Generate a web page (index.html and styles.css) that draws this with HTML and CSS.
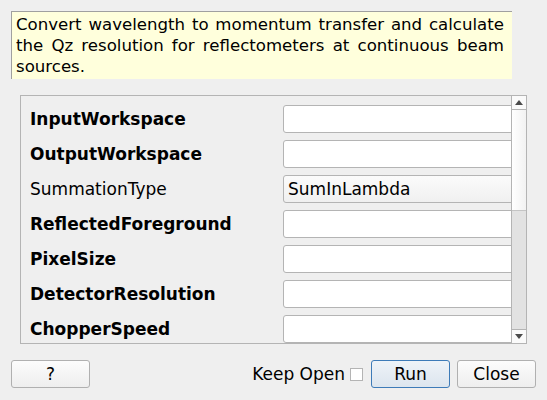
FILE: index.html
```html
<!DOCTYPE html>
<html>
<head>
<meta charset="utf-8">
<link rel="stylesheet" href="styles.css">
</head>
<body>
<div class="dialog">
  <div class="desc">Convert wavelength to momentum transfer and calculate the Qz resolution for reflectometers at continuous beam sources.</div>
  <div class="frame">
    <div class="props">
      <div class="row"><span class="label bold">InputWorkspace</span><span class="field"></span></div>
      <div class="row"><span class="label bold">OutputWorkspace</span><span class="field"></span></div>
      <div class="row"><span class="label">SummationType</span><span class="field combo">SumInLambda</span></div>
      <div class="row"><span class="label bold">ReflectedForeground</span><span class="field"></span></div>
      <div class="row"><span class="label bold">PixelSize</span><span class="field"></span></div>
      <div class="row"><span class="label bold">DetectorResolution</span><span class="field"></span></div>
      <div class="row"><span class="label bold">ChopperSpeed</span><span class="field"></span></div>
    </div>
    <div class="scrollbar">
      <div class="sb-btn"><svg width="8" height="5" viewBox="0 0 8 5"><polygon points="0,5 8,5 4,0" fill="#4a4a4a"/></svg></div>
      <div class="sb-handle"></div>
      <div class="sb-track"></div>
      <div class="sb-btn sb-down"><svg width="8" height="5" viewBox="0 0 8 5"><polygon points="0,0 8,0 4,5" fill="#4a4a4a"/></svg></div>
    </div>
  </div>
  <div class="buttons">
    <button class="btn help">?</button>
    <div class="spacer"></div>
    <span class="keep">Keep Open</span>
    <span class="check"></span>
    <button class="btn run">Run</button>
    <button class="btn close">Close</button>
  </div>
</div>
</body>
</html>
```
FILE: styles.css
```css
html, body {
  margin: 0;
  padding: 0;
  background: #efefef;
}
body {
  font-family: "DejaVu Sans", sans-serif;
  font-size: 17px;
  color: #000;
  width: 547px;
  height: 400px;
  overflow: hidden;
}
.dialog {
  display: flex;
  flex-direction: column;
  padding: 11px 11px 0 11px;
}
.desc {
  width: 501px;
  height: 68px;
  box-sizing: border-box;
  background: #ffffdc;
  border-top: 1px solid #a0a0a0;
  border-left: 1px solid #a0a0a0;
  padding: 2px 8px 0 4px;
  font-size: 16.6px;
  line-height: 21px;
  text-align: justify;
}
.frame {
  margin: 16px 0 0 9px;
  width: 507px;
  height: 249px;
  box-sizing: border-box;
  border: 1px solid #b4b4b4;
  display: flex;
  overflow: hidden;
}
.props {
  flex: 1;
  overflow: hidden;
  padding: 9px 0 0 9px;
  display: flex;
  flex-direction: column;
  gap: 7px;
}
.row {
  display: flex;
  align-items: center;
  height: 28px;
  flex-shrink: 0;
}
.label {
  width: 253px;
  flex-shrink: 0;
}
.bold {
  font-weight: bold;
}
.field {
  flex-shrink: 0;
  width: 260px;
  height: 28px;
  box-sizing: border-box;
  background: #fff;
  border: 1px solid #b4b4b4;
  border-radius: 3px;
}
.combo {
  background: linear-gradient(#fbfbfb, #f0f0f0);
  padding-left: 4px;
  line-height: 26px;
}
.scrollbar {
  width: 14px;
  flex-shrink: 0;
  border-left: 1px solid #b4b4b4;
  display: flex;
  flex-direction: column;
}
.sb-btn {
  height: 13px;
  flex-shrink: 0;
  background: #fafafa;
  border-bottom: 1px solid #b4b4b4;
  display: flex;
  align-items: center;
  justify-content: center;
}
.sb-down {
  border-bottom: none;
  border-top: 1px solid #b4b4b4;
  height: 13px;
}
.sb-handle {
  height: 100px;
  flex-shrink: 0;
  background: linear-gradient(90deg, #ffffff, #f2f2f2);
  border-bottom: 1px solid #c4c4c4;
}
.sb-track {
  flex: 1;
  background: #e2e2e2;
}
.buttons {
  display: flex;
  align-items: center;
  margin-top: 16px;
  height: 28px;
}
.spacer {
  flex: 1;
}
.btn {
  font-family: "DejaVu Sans", sans-serif;
  font-size: 17px;
  height: 28px;
  width: 79px;
  box-sizing: border-box;
  border: 1px solid #b0b0b0;
  border-radius: 3px;
  background: linear-gradient(#fcfcfc, #eeeeee);
  color: #000;
  padding: 0;
}
.help {
  width: 79px;
}
.run {
  border-color: #3d7bb8;
  background: linear-gradient(#eef3f8, #dce5ee);
  margin-left: 8px;
}
.close {
  margin-left: 7px;
}
.keep {
  margin-right: 5px;
}
.check {
  width: 13px;
  height: 13px;
  box-sizing: border-box;
  border: 1px solid #b4b4b4;
  background: #fff;
}
```
